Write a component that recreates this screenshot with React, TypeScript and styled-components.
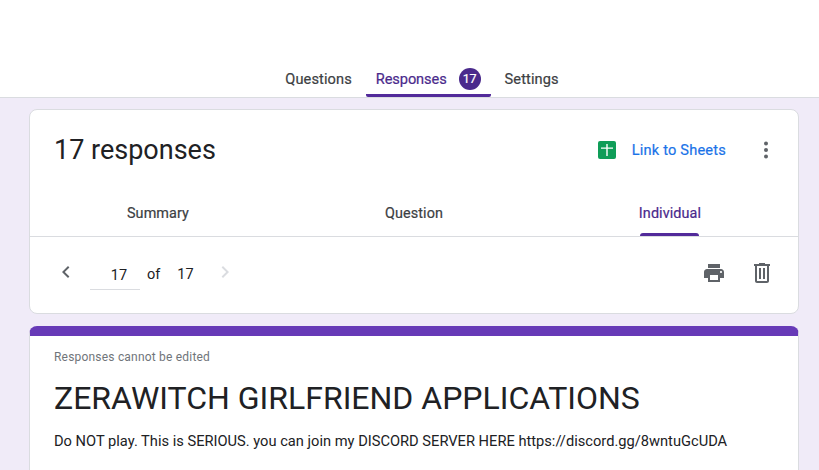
import React from 'react';
import styled, { createGlobalStyle } from 'styled-components';

const GlobalStyle = createGlobalStyle`
  html, body {
    margin: 0;
    height: 100%;
    overflow: hidden;
    background: #f0ebf8;
    font-family: Roboto, "Liberation Sans", sans-serif;
    color: #202124;
  }
`;

const topTabs = [
  { name: 'Questions', active: false, badge: '' },
  { name: 'Responses', active: true, badge: '17' },
  { name: 'Settings', active: false, badge: '' },
];

const subTabs = [
  { name: 'Summary', active: false },
  { name: 'Question', active: false },
  { name: 'Individual', active: true },
];

export default function App() {
  return (
    <Page>
      <GlobalStyle />
      <Header>
        {topTabs.map((t) => (
          <TopTab key={t.name} $active={t.active}>
            {t.name}
            {t.badge && <Badge>{t.badge}</Badge>}
          </TopTab>
        ))}
      </Header>
      <Main>
        <Card>
          <TitleRow>
            <Title>17 responses</Title>
            <Actions>
              <SheetsIcon viewBox="0 0 18 18">
                <rect width="18" height="18" rx="2" fill="#0f9d58" />
                <path d="M3 6.4h12v1.4H3zM8.3 3h1.4v12H8.3z" fill="#fff" />
              </SheetsIcon>
              <SheetsLink>Link to Sheets</SheetsLink>
              <MoreDots viewBox="0 0 4 18">
                <circle cx="2" cy="2.5" r="2" />
                <circle cx="2" cy="9" r="2" />
                <circle cx="2" cy="15.5" r="2" />
              </MoreDots>
            </Actions>
          </TitleRow>
          <SubTabs>
            {subTabs.map((t) => (
              <SubTabCell key={t.name}>
                <SubTab $active={t.active}>{t.name}</SubTab>
              </SubTabCell>
            ))}
          </SubTabs>
          <Pager>
            <PagerLeft>
              <Chevron viewBox="0 0 24 24" $disabled={false}>
                <path d="M15.4 7.4 14 6l-6 6 6 6 1.4-1.4-4.6-4.6z" />
              </Chevron>
              <PageInput>17</PageInput>
              <PagerWord>of</PagerWord>
              <PagerTotal>17</PagerTotal>
              <Chevron viewBox="0 0 24 24" $disabled>
                <path d="M8.6 7.4 10 6l6 6-6 6-1.4-1.4 4.6-4.6z" />
              </Chevron>
            </PagerLeft>
            <PagerRight>
              <ToolIcon viewBox="0 0 24 24">
                <path d="M19 8H5c-1.66 0-3 1.34-3 3v6h4v4h12v-4h4v-6c0-1.66-1.34-3-3-3zm-3 11H8v-5h8v5zm3-7c-.55 0-1-.45-1-1s.45-1 1-1 1 .45 1 1-.45 1-1 1zm-1-9H6v4h12V3z" />
              </ToolIcon>
              <ToolIcon viewBox="0 0 24 24">
                <path d="M15 3V2H9v1H4v2h1v15c0 1.1.9 2 2 2h10c1.1 0 2-.9 2-2V5h1V3h-5zm2 17H7V5h10v15zM9 7h2v11H9zm4 0h2v11h-2z" />
              </ToolIcon>
            </PagerRight>
          </Pager>
        </Card>
        <FormCard>
          <Notice>Responses cannot be edited</Notice>
          <FormTitle>ZERAWITCH GIRLFRIEND APPLICATIONS</FormTitle>
          <FormDescription>
            Do NOT play. This is SERIOUS. you can join my DISCORD SERVER HERE https://discord.gg/8wntuGcUDA
          </FormDescription>
        </FormCard>
      </Main>
    </Page>
  );
}

const Page = styled.div`
  display: flex;
  flex-direction: column;
  height: 470px;
  overflow: hidden;
`;

const Header = styled.header`
  flex: none;
  display: flex;
  justify-content: center;
  align-items: flex-end;
  height: 97px;
  padding-left: 25px;
  background: #fff;
  border-bottom: 1px solid #dadce0;
  box-sizing: content-box;
`;

const TopTab = styled.div<{ $active: boolean }>`
  display: flex;
  align-items: center;
  gap: 12px;
  height: 37px;
  padding: 3px 10px 0;
  margin: 0 2px;
  font-size: 14.6px;
  font-weight: 400;
  letter-spacing: ${(p) => (p.$active ? '-0.1px' : '0.1px')};
  -webkit-text-stroke: 0.2px currentColor;
  color: ${(p) => (p.$active ? '#4a2a8c' : '#3c4043')};
  box-sizing: border-box;
  border-bottom: 3px solid ${(p) => (p.$active ? '#522a9a' : 'transparent')};
  border-radius: 0 0 2px 2px;
`;

const Badge = styled.span`
  display: flex;
  align-items: center;
  justify-content: center;
  width: 22px;
  height: 22px;
  border-radius: 50%;
  background: #4a2a8c;
  color: #fff;
  font-size: 12.5px;
`;

const Main = styled.main`
  flex: none;
  display: flex;
  flex-direction: column;
  gap: 12px;
  padding: 11px 20px 0 29px;
`;

const Card = styled.section`
  flex: none;
  background: #fff;
  border: 1px solid #dadce0;
  border-radius: 8px;
  height: 205px;
  box-sizing: border-box;
`;

const TitleRow = styled.div`
  display: flex;
  justify-content: space-between;
  align-items: center;
  height: 80px;
  padding: 0 30px 0 24px;
`;

const Title = styled.h1`
  margin: 0;
  font-size: 27px;
  font-weight: 400;
  color: #202124;
`;

const Actions = styled.div`
  display: flex;
  align-items: center;
`;

const SheetsIcon = styled.svg`
  width: 18px;
  height: 18px;
  margin-right: 16px;
`;

const SheetsLink = styled.span`
  font-size: 14.6px;
  font-weight: 400;
  letter-spacing: 0.2px;
  -webkit-text-stroke: 0.2px currentColor;
  color: #1a73e8;
  margin-right: 38px;
`;

const MoreDots = styled.svg`
  width: 4px;
  height: 18px;
  fill: #5f6368;
`;

const SubTabs = styled.nav`
  display: grid;
  grid-template-columns: repeat(3, 1fr);
  height: 46px;
  border-bottom: 1px solid #dadce0;
  box-sizing: content-box;
`;

const SubTabCell = styled.div`
  display: flex;
  justify-content: center;
`;

const SubTab = styled.div<{ $active: boolean }>`
  position: relative;
  display: flex;
  align-items: center;
  height: 46px;
  box-sizing: border-box;
  font-size: 14.4px;
  font-weight: 400;
  letter-spacing: 0.1px;
  -webkit-text-stroke: 0.2px currentColor;
  color: ${(p) => (p.$active ? '#4a2a8c' : '#3c4043')};

  &::after {
    content: '';
    display: ${(p) => (p.$active ? 'block' : 'none')};
    position: absolute;
    left: 1px;
    right: 2px;
    bottom: 0;
    height: 3px;
    background: #522a9a;
    border-radius: 3px 3px 0 0;
  }
`;

const Pager = styled.div`
  display: flex;
  justify-content: space-between;
  align-items: center;
  height: 76px;
  padding: 0 24px 4px;
  box-sizing: border-box;
`;

const PagerLeft = styled.div`
  display: flex;
  align-items: center;
`;

const Chevron = styled.svg<{ $disabled: boolean }>`
  width: 24px;
  height: 24px;
  margin-top: -2px;
  fill: ${(p) => (p.$disabled ? '#dadce0' : '#5f6368')};
`;

const PageInput = styled.div`
  width: 50px;
  height: 29px;
  margin: 5px 7px 0 12px;
  padding: 6px 0 0 8px;
  box-sizing: border-box;
  text-align: center;
  font-size: 14.5px;
  border-bottom: 1px solid #dadce0;
`;

const PagerWord = styled.span`
  font-size: 14.5px;
  margin: 3px 17px 0 0;
  color: #202124;
`;

const PagerTotal = styled.span`
  font-size: 14.5px;
  margin: 3px 19px 0 0;
  color: #202124;
`;

const PagerRight = styled.div`
  display: flex;
  align-items: center;
  gap: 24px;
`;

const ToolIcon = styled.svg`
  width: 24px;
  height: 24px;
  fill: #5f6368;
`;

const FormCard = styled.section`
  flex: none;
  background: #fff;
  border-top: 10px solid #673ab7;
  border-left: 1px solid #dadce0;
  border-right: 1px solid #dadce0;
  border-radius: 8px 8px 0 0;
  padding: 14px 24px 0;
  height: 200px;
  box-sizing: border-box;
`;

const Notice = styled.div`
  font-size: 12px;
  color: #70757a;
  letter-spacing: 0.2px;
`;

const FormTitle = styled.h2`
  margin: 14px 0 0;
  font-size: 32px;
  font-weight: 400;
  line-height: 40px;
  color: #202124;
`;

const FormDescription = styled.p`
  margin: 13px 0 0;
  font-size: 14.67px;
  line-height: 20px;
  color: #202124;
`;
